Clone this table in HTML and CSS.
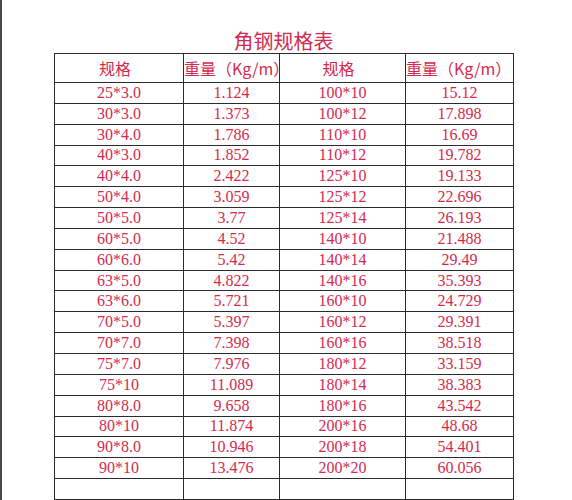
FILE: index.html
```html
<!DOCTYPE html>
<html lang="zh">
<head>
<meta charset="utf-8">
<title>角钢规格表</title>
<link rel="stylesheet" href="styles.css">
</head>
<body>
<div class="sheet">
  <h1 class="title">角钢规格表</h1>
  <table class="spec">
    <colgroup>
      <col class="c1"><col class="c2"><col class="c3"><col class="c4">
    </colgroup>
    <thead>
      <tr><th>规格</th><th>重量（Kg/m）</th><th>规格</th><th>重量（Kg/m）</th></tr>
    </thead>
    <tbody>
      <tr><td>25*3.0</td><td>1.124</td><td>100*10</td><td>15.12</td></tr>
      <tr><td>30*3.0</td><td>1.373</td><td>100*12</td><td>17.898</td></tr>
      <tr><td>30*4.0</td><td>1.786</td><td>110*10</td><td>16.69</td></tr>
      <tr><td>40*3.0</td><td>1.852</td><td>110*12</td><td>19.782</td></tr>
      <tr><td>40*4.0</td><td>2.422</td><td>125*10</td><td>19.133</td></tr>
      <tr><td>50*4.0</td><td>3.059</td><td>125*12</td><td>22.696</td></tr>
      <tr><td>50*5.0</td><td>3.77</td><td>125*14</td><td>26.193</td></tr>
      <tr><td>60*5.0</td><td>4.52</td><td>140*10</td><td>21.488</td></tr>
      <tr><td>60*6.0</td><td>5.42</td><td>140*14</td><td>29.49</td></tr>
      <tr><td>63*5.0</td><td>4.822</td><td>140*16</td><td>35.393</td></tr>
      <tr><td>63*6.0</td><td>5.721</td><td>160*10</td><td>24.729</td></tr>
      <tr><td>70*5.0</td><td>5.397</td><td>160*12</td><td>29.391</td></tr>
      <tr><td>70*7.0</td><td>7.398</td><td>160*16</td><td>38.518</td></tr>
      <tr><td>75*7.0</td><td>7.976</td><td>180*12</td><td>33.159</td></tr>
      <tr><td>75*10</td><td>11.089</td><td>180*14</td><td>38.383</td></tr>
      <tr><td>80*8.0</td><td>9.658</td><td>180*16</td><td>43.542</td></tr>
      <tr><td>80*10</td><td>11.874</td><td>200*16</td><td>48.68</td></tr>
      <tr><td>90*8.0</td><td>10.946</td><td>200*18</td><td>54.401</td></tr>
      <tr><td>90*10</td><td>13.476</td><td>200*20</td><td>60.056</td></tr>
      <tr class="empty"><td></td><td></td><td></td><td></td></tr>
    </tbody>
  </table>
</div>
</body>
</html>
```

FILE: styles.css
```css
html, body {
  margin: 0;
  padding: 0;
  background: #ffffff;
}

.sheet {
  height: 500px;
  border-left: 2px solid #4a4a4a;
  box-sizing: border-box;
  padding-left: 52px;
  overflow: hidden;
}

.title {
  width: 459px;
  margin: 0;
  padding-top: 31px;
  height: 22px;
  line-height: 20px;
  font-family: "Noto Sans CJK SC", sans-serif;
  font-weight: 400;
  font-size: 20px;
  color: #d42a4e;
  text-align: center;
}

.spec {
  border-collapse: collapse;
  table-layout: fixed;
  width: 459px;
  color: #d42a4e;
}

.c1 { width: 129px; }
.c2 { width: 96px; }
.c3 { width: 126px; }
.c4 { width: 108px; }

.spec th,
.spec td {
  border: 1px solid #2b2b2b;
  padding: 0;
  text-align: center;
  vertical-align: middle;
  white-space: nowrap;
  overflow: visible;
}

.spec th {
  height: 28px;
  padding-right: 8px;
  font-family: "Noto Sans CJK SC", sans-serif;
  font-weight: 400;
  font-size: 16px;
  line-height: 18px;
}

.spec td {
  height: 19.85px;
  font-family: "Liberation Serif", "Noto Sans CJK SC", serif;
  font-size: 16px;
  line-height: 18px;
}
```
